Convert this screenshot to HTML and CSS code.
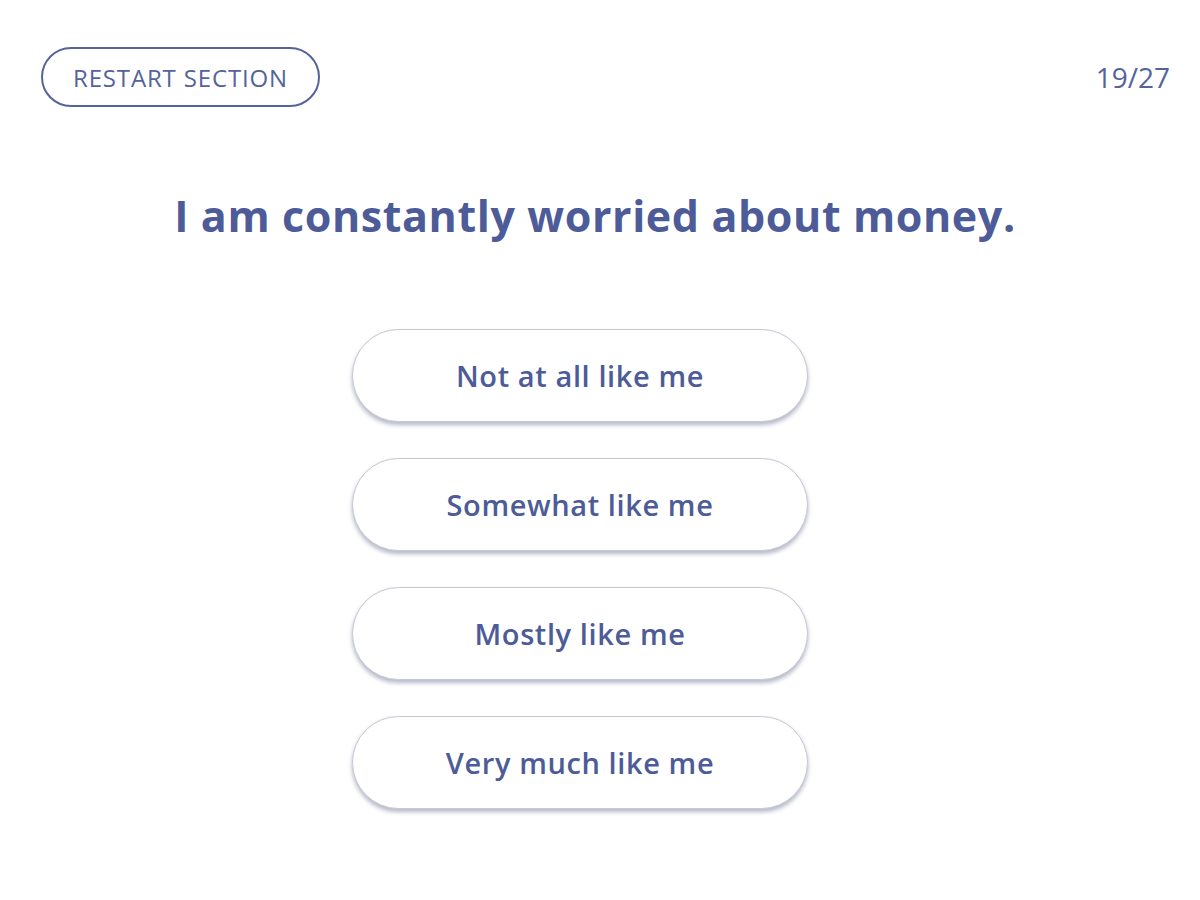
FILE: index.html
```html
<!DOCTYPE html>
<html lang="en">
<head>
<meta charset="utf-8">
<title>Quiz</title>
<link rel="stylesheet" href="styles.css">
</head>
<body>
<div class="page">
  <header class="topbar">
    <button class="restart">RESTART SECTION</button>
    <div class="progress">19/27</div>
  </header>
  <h1 class="question">I am constantly worried about money.</h1>
  <div class="options">
    <button class="option">Not at all like me</button>
    <button class="option">Somewhat like me</button>
    <button class="option">Mostly like me</button>
    <button class="option">Very much like me</button>
  </div>
</div>
</body>
</html>
```
FILE: styles.css
```css
html, body {
  margin: 0;
  padding: 0;
  background: #ffffff;
}
body {
  font-family: "Open Sans", Lato, sans-serif;
  color: #4d5b98;
}
.page {
  width: 1200px;
  height: 900px;
}
.topbar {
  display: flex;
  justify-content: space-between;
  align-items: center;
  height: 60px;
  padding: 47px 30px 0 41px;
}
.restart {
  box-sizing: border-box;
  width: 279px;
  height: 60px;
  border: 2px solid #55639c;
  border-radius: 30px;
  background: #fff;
  color: #55639c;
  font-family: inherit;
  font-size: 24px;
  letter-spacing: 0.85px;
  padding: 0;
}
.progress {
  font-size: 28px;
  color: #55639c;
}
.question {
  margin: 84px 10px 0 0;
  text-align: center;
  font-size: 43px;
  font-weight: 700;
  line-height: 50px;
  letter-spacing: 0.6px;
  color: #4d5b98;
}
.options {
  display: flex;
  flex-direction: column;
  align-items: center;
  gap: 36px;
  margin-top: 88px;
  padding-right: 40px;
}
.option {
  box-sizing: border-box;
  width: 456px;
  height: 93px;
  border: 1px solid #c6c8d4;
  border-radius: 47px;
  background: #fff;
  box-shadow: 0 3px 4px rgba(60, 70, 110, 0.38);
  color: #4d5b98;
  font-family: inherit;
  font-size: 29px;
  font-weight: 600;
  letter-spacing: 0.6px;
  padding: 0;
}
```
